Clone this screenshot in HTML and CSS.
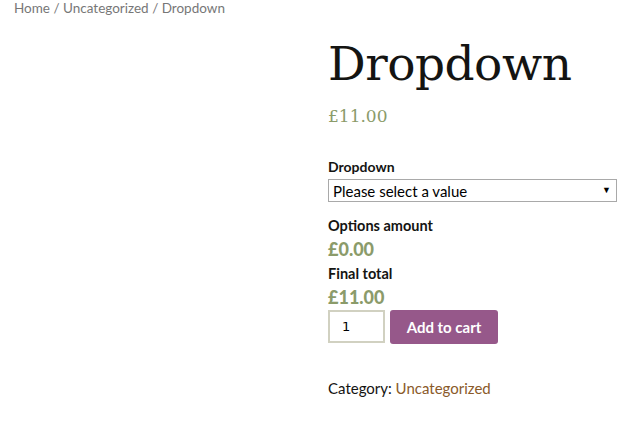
FILE: index.html
```html
<!DOCTYPE html>
<html lang="en">
<head>
  <meta charset="UTF-8">
  <title>Dropdown</title>
  <link rel="stylesheet" href="styles.css">
</head>
<body>
  <nav class="breadcrumb">
    <a href="#">Home</a> / <a href="#">Uncategorized</a> / Dropdown
  </nav>

  <div class="product">
    <div class="gallery"></div>

    <div class="summary">
      <h1 class="product-title">Dropdown</h1>
      <p class="price">&pound;11.00</p>

      <form class="cart">
        <div class="field">
          <label for="dropdown">Dropdown</label>
          <div class="select-wrap">
            <select id="dropdown">
              <option>Please select a value</option>
            </select>
            <span class="select-arrow">&#9660;</span>
          </div>
        </div>

        <div class="totals">
          <div class="total-label">Options amount</div>
          <div class="total-value">&pound;0.00</div>
          <div class="total-label">Final total</div>
          <div class="total-value">&pound;11.00</div>
        </div>

        <div class="actions">
          <input type="number" class="qty" value="1" min="1">
          <button type="submit" class="add-btn">Add to cart</button>
        </div>
      </form>

      <div class="meta">
        Category: <a href="#">Uncategorized</a>
      </div>
    </div>
  </div>
</body>
</html>
```

FILE: styles.css
```css
body {
  margin: 0;
  padding: 0 14px;
  font-family: Lato, "Open Sans", sans-serif;
  font-size: 15px;
  color: #141412;
  background-color: #fff;
}

a {
  text-decoration: none;
}

.breadcrumb {
  font-size: 13.5px;
  color: #777;
  line-height: 17px;
}

.breadcrumb a {
  color: #777;
}

.product {
  display: flex;
}

.gallery {
  width: 314px;
  flex-shrink: 0;
}

.summary {
  flex: 1;
}

.product-title {
  font-family: "DejaVu Serif", serif;
  font-weight: normal;
  font-size: 47px;
  line-height: 56px;
  margin: 19px 0 0 0;
  letter-spacing: -0.5px;
}

.price {
  font-family: "DejaVu Serif", serif;
  font-size: 17px;
  color: #8b9b6a;
  margin: 14px 0 0 0;
  line-height: 20px;
}

.cart {
  margin-top: 32px;
}

.field label {
  display: block;
  font-weight: bold;
  font-size: 14px;
  line-height: 17px;
}

.select-wrap {
  position: relative;
  width: 289px;
  margin-top: 4px;
}

select {
  display: block;
  width: 289px;
  height: 23px;
  font-family: Lato, sans-serif;
  font-size: 15px;
  color: #000;
  border: 1px solid #a9a9a9;
  background-color: #fff;
  padding: 0 4px;
  -webkit-appearance: none;
  appearance: none;
  border-radius: 0;
}

.select-arrow {
  position: absolute;
  right: 6px;
  top: 6px;
  font-size: 9px;
  line-height: 10px;
  color: #000;
  pointer-events: none;
}

.totals {
  margin-top: 14px;
}

.total-label {
  font-weight: bold;
  font-size: 14.5px;
  line-height: 20px;
}

.total-value {
  font-weight: 900;
  font-size: 18px;
  line-height: 26px;
  color: #8b9b6a;
  margin-bottom: 2px;
}

.total-value:last-child {
  margin-bottom: 0;
}

.actions {
  display: flex;
  gap: 5px;
}

.qty {
  width: 41px;
  height: 29px;
  box-sizing: content-box;
  padding: 0 0 0 12px;
  border: 2px solid #d1d1c1;
  text-align: left;
  font-family: "DejaVu Sans", sans-serif;
  font-size: 13px;
  -moz-appearance: textfield;
}

.qty::-webkit-inner-spin-button,
.qty::-webkit-outer-spin-button {
  -webkit-appearance: none;
  margin: 0;
}

.add-btn {
  width: 108px;
  height: 34px;
  background-color: #96588a;
  color: #fff;
  border: none;
  border-radius: 3px;
  font-family: Lato, sans-serif;
  font-weight: bold;
  font-size: 15px;
  cursor: pointer;
  padding: 0;
}

.meta {
  margin-top: 35px;
  font-size: 15px;
  line-height: 18px;
}

.meta a {
  color: #8a5a2a;
}
```
